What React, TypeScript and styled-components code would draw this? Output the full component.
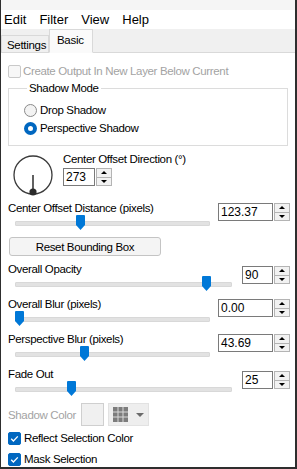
import styled, { createGlobalStyle } from 'styled-components'

const Global = createGlobalStyle`
  body {
    margin: 0;
    background: #ffffff;
    font-family: "Liberation Sans", Arial, sans-serif;
  }
`

export default function App() {
  return (
    <>
      <Global />
      <Window>
        <TitleStrip />
        <MenuBar>
          <MenuItem>Edit</MenuItem>
          <MenuItem>Filter</MenuItem>
          <MenuItem>View</MenuItem>
          <MenuItem>Help</MenuItem>
        </MenuBar>
        <TabStrip>
          <Tab>Settings</Tab>
          <Tab $active>Basic</Tab>
        </TabStrip>

        <Panel>
          <CheckRow $disabled>
            <CheckBox $disabled />
            <span>Create Output In New Layer Below Current</span>
          </CheckRow>

          <Group>
            <Legend>Shadow Mode</Legend>
            <RadioRow>
              <Radio />
              <span>Drop Shadow</span>
            </RadioRow>
            <RadioRow>
              <Radio $checked />
              <span>Perspective Shadow</span>
            </RadioRow>
          </Group>

          <DialRow>
            <Dial width="44" height="44" viewBox="0 0 44 44">
              <circle cx="21" cy="21" r="19" fill="none" stroke="#3a3a3a" strokeWidth="1.3" />
              <line x1="21" y1="21" x2="21" y2="38" stroke="#3a3a3a" strokeWidth="1.6" />
              <circle cx="21" cy="38" r="3.6" fill="#2b2b2b" />
            </Dial>
            <DialSide>
              <Label>Center Offset Direction (°)</Label>
              <Spin value="273" width={32} mt={2} />
            </DialSide>
          </DialRow>

          <SliderBlock mt={4} label="Center Offset Distance (pixels)" value="123.37" frac={0.328} wide />
          <ResetButton>Reset Bounding Box</ResetButton>
          <SliderBlock mt={7} label="Overall Opacity" value="90" frac={0.9} />
          <SliderBlock mt={6} label="Overall Blur (pixels)" value="0.00" frac={0} wide />
          <SliderBlock mt={6} label="Perspective Blur (pixels)" value="43.69" frac={0.35} wide />
          <SliderBlock mt={6} label="Fade Out" value="25" frac={0.25} />

          <ColorRow>
            <ColorLabel>Shadow Color</ColorLabel>
            <Swatch />
            <PaletteButton>
              <svg width="15" height="15" viewBox="0 0 15 15">
                <rect x="0" y="0" width="15" height="15" fill="#7c7c7c" />
                <path d="M5 0V15M10 0V15M0 5H15M0 10H15" stroke="#d8d8d8" strokeWidth="1" />
              </svg>
              <DropArrow />
            </PaletteButton>
          </ColorRow>

          <CheckRow $mt={4}>
            <CheckBox $checked>
              <CheckMark />
            </CheckBox>
            <span>Reflect Selection Color</span>
          </CheckRow>
          <CheckRow $mt={5}>
            <CheckBox $checked>
              <CheckMark />
            </CheckBox>
            <span>Mask Selection</span>
          </CheckRow>
        </Panel>
      </Window>
    </>
  )
}

function CheckMark() {
  return (
    <svg width="13" height="13" viewBox="0 0 13 13">
      <path d="M3.2 6.8 L5.4 9 L9.8 4.4" fill="none" stroke="#ffffff" strokeWidth="1.3" />
    </svg>
  )
}

function Spin({ value, width, mt }: { value: string; width: number; mt: number }) {
  return (
    <SpinBox style={{ marginTop: mt }}>
      <SpinInput $w={width}>{value}</SpinInput>
      <SpinButtons>
        <SpinHalf>
          <Arrow $up />
        </SpinHalf>
        <SpinHalf>
          <Arrow />
        </SpinHalf>
      </SpinButtons>
    </SpinBox>
  )
}

function SliderBlock(props: { mt: number; label: string; value: string; frac: number; wide?: boolean }) {
  return (
    <Block $mt={props.mt}>
      <BlockLeft $wide={props.wide}>
        <Label>{props.label}</Label>
        <Slider>
          <Track />
          <Thumb style={{ left: `calc(${props.frac} * (100% - 9px))` }} width="9" height="15" viewBox="0 0 9 15">
            <path d="M0 1 Q0 0 1 0 H8 Q9 0 9 1 V10 L4.5 15 L0 10 Z" fill="#0078d7" />
          </Thumb>
        </Slider>
      </BlockLeft>
      <Spin value={props.value} width={props.wide ? 55 : 31} mt={props.wide ? 1 : 3} />
    </Block>
  )
}

const Window = styled.div`
  width: 297px;
  height: 469px;
  box-sizing: border-box;
  border-left: 1px solid #2e2e2e;
  border-right: 2px solid #2e2e2e;
  border-bottom: 2px solid #2e2e2e;
  background: #ffffff;
  display: flex;
  flex-direction: column;
  overflow: hidden;
`

const TitleStrip = styled.div`
  height: 10px;
  background: #f5f5f5;
`

const MenuBar = styled.div`
  height: 19px;
  display: flex;
  align-items: center;
  padding-left: 3px;
  background: #ffffff;
`

const MenuItem = styled.span`
  font-size: 13px;
  color: #000;
  margin-right: 13px;
`

const TabStrip = styled.div`
  height: 24px;
  box-sizing: border-box;
  display: flex;
  align-items: flex-end;
  background: #f0f0f0;
  border-bottom: 1px solid #d9d9d9;
`

const Tab = styled.div<{ $active?: boolean }>`
  box-sizing: border-box;
  height: ${(p) => (p.$active ? '24px' : '18px')};
  width: ${(p) => (p.$active ? '44px' : '48px')};
  margin-bottom: -1px;
  padding: ${(p) => (p.$active ? '4px 0 0 7px' : '3px 0 0 5px')};
  font-size: 11.5px;
  letter-spacing: -0.3px;
  background: ${(p) => (p.$active ? '#fafafa' : '#f0f0f0')};
  border: 1px solid #d9d9d9;
  border-bottom: ${(p) => (p.$active ? '1px solid #fafafa' : '1px solid #d9d9d9')};
  color: #000;
`

const Panel = styled.div`
  flex: 1;
  display: flex;
  flex-direction: column;
  padding: 10px 5px 0 7px;
  font-size: 11.5px;
  letter-spacing: -0.35px;
  color: #000;
`

const CheckRow = styled.div<{ $disabled?: boolean; $mt?: number }>`
  height: 16px;
  display: flex;
  align-items: center;
  gap: ${(p) => (p.$disabled ? '2px' : '3px')};
  margin-top: ${(p) => p.$mt ?? 0}px;
  color: ${(p) => (p.$disabled ? '#a3a3a3' : '#000')};
`

const CheckBox = styled.span<{ $checked?: boolean; $disabled?: boolean }>`
  box-sizing: border-box;
  width: 13px;
  height: 13px;
  border-radius: 2px;
  display: flex;
  background: ${(p) => (p.$checked ? '#0067c0' : '#f7f7f7')};
  border: 1px solid ${(p) => (p.$checked ? '#0067c0' : '#c9c9c9')};
  svg {
    margin: -1px;
  }
`

const Group = styled.fieldset`
  margin: 2px 2px 0 0;
  padding: 7px 0 9px 15px;
  border: 1px solid #dcdcdc;
  display: flex;
  flex-direction: column;
  gap: 2px;
`

const Legend = styled.legend`
  margin-left: 3px;
  padding: 0 2px;
  line-height: 14px;
  font-size: 11.5px;
`

const RadioRow = styled.div`
  height: 16px;
  display: flex;
  align-items: center;
  gap: 3px;
`

const Radio = styled.span<{ $checked?: boolean }>`
  box-sizing: border-box;
  width: 13px;
  height: 13px;
  border-radius: 50%;
  background: ${(p) => (p.$checked ? '#ffffff' : '#f3f3f3')};
  border: ${(p) => (p.$checked ? '4px solid #0067c0' : '1px solid #8a8a8a')};
`

const DialRow = styled.div`
  margin-top: 7px;
  display: flex;
`

const Dial = styled.svg`
  margin: 1px 5px 0 4px;
`

const DialSide = styled.div`
  display: flex;
  flex-direction: column;
  align-items: flex-start;
  & > div {
    margin-left: 2px;
  }
`

const Label = styled.div`
  height: 13px;
  line-height: 13px;
  white-space: nowrap;
`

const SpinBox = styled.div`
  display: flex;
  gap: 1px;
`

const SpinInput = styled.div<{ $w: number }>`
  box-sizing: border-box;
  width: ${(p) => p.$w}px;
  height: 18px;
  border: 1px solid #7a7a7a;
  background: #fff;
  padding-left: 2px;
  font-size: 12px;
  letter-spacing: 0;
  line-height: 16px;
  color: #000;
`

const SpinButtons = styled.div`
  width: 16px;
  height: 18px;
  display: flex;
  flex-direction: column;
`

const SpinHalf = styled.div`
  flex: 1;
  box-sizing: border-box;
  border: 1px solid #b4b4b4;
  background: #f2f2f2;
  display: flex;
  align-items: center;
  justify-content: center;
  & + & {
    border-top: none;
  }
`

const Arrow = styled.span<{ $up?: boolean }>`
  width: 0;
  height: 0;
  border-left: 3px solid transparent;
  border-right: 3px solid transparent;
  ${(p) => (p.$up ? 'border-bottom: 3px solid #000;' : 'border-top: 3px solid #000;')}
`

const Block = styled.div<{ $mt: number }>`
  margin-top: ${(p) => p.$mt}px;
  display: grid;
  grid-template-columns: 1fr auto;
  align-items: start;
`

const BlockLeft = styled.div<{ $wide?: boolean }>`
  display: flex;
  flex-direction: column;
  padding-right: ${(p) => (p.$wide ? '8px' : '10px')};
`

const Slider = styled.div`
  position: relative;
  height: 16px;
  margin-left: 7px;
  display: flex;
  align-items: center;
`

const Track = styled.div`
  flex: 1;
  height: 3px;
  background: #e2e2e2;
  border: 1px solid #d8d8d8;
  border-radius: 1px;
`

const Thumb = styled.svg`
  position: absolute;
  top: 0;
`

const ResetButton = styled.button`
  margin: 6px 0 0 1px;
  width: 152px;
  height: 19px;
  padding: 0;
  box-sizing: border-box;
  border: 1px solid #c4c4c4;
  border-radius: 3px;
  background: #f4f4f4;
  font-family: "Liberation Sans", Arial, sans-serif;
  font-size: 11.5px;
  letter-spacing: -0.35px;
  color: #000;
`

const ColorRow = styled.div`
  margin-top: 6px;
  height: 23px;
  display: flex;
  align-items: center;
`

const ColorLabel = styled.span`
  width: 73px;
  color: #a3a3a3;
`

const Swatch = styled.div`
  box-sizing: border-box;
  width: 23px;
  height: 23px;
  background: #f0f0f0;
  border: 1px solid #cfcfcf;
`

const PaletteButton = styled.div`
  box-sizing: border-box;
  margin-left: 4px;
  width: 41px;
  height: 23px;
  background: #eeeeee;
  border: 1px solid #e2e2e2;
  display: flex;
  align-items: center;
  padding-left: 4px;
  gap: 8px;
`

const DropArrow = styled.span`
  width: 0;
  height: 0;
  border-left: 4px solid transparent;
  border-right: 4px solid transparent;
  border-top: 4px solid #6a6a6a;
`
